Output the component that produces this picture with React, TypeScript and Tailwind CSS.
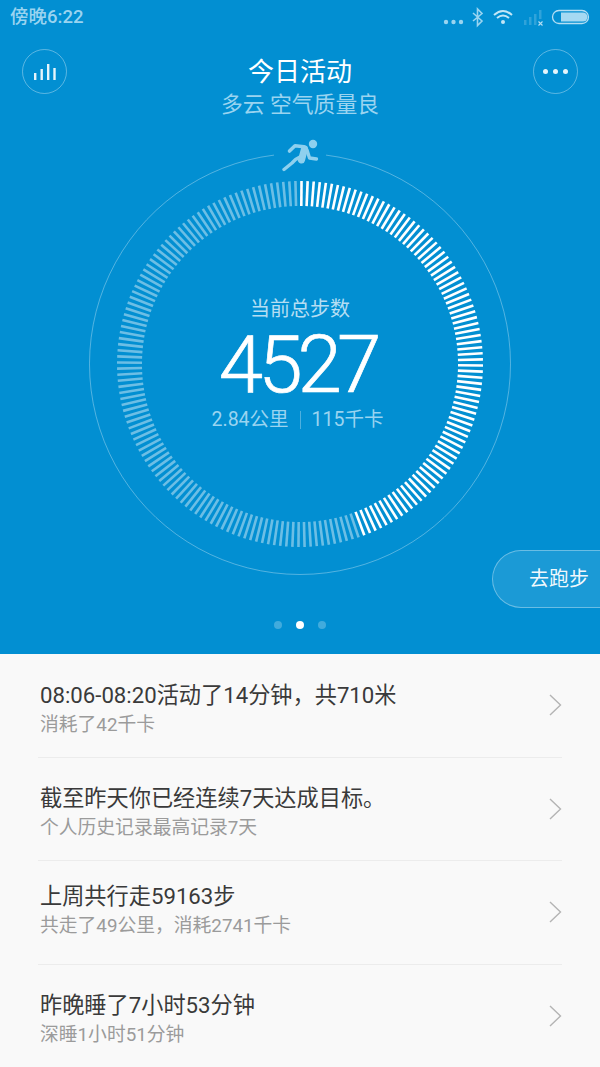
const TICKS = 188;
const ticks = Array.from({ length: TICKS }, (_, i) => i);

function Ring() {
  const cx = 212;
  const cy = 212;
  return (
    <svg width="424" height="424" viewBox="0 0 424 424" className="block">
      <path d="M 186 3.1 A 210.5 210.5 0 1 0 238 3.1" fill="none" stroke="#ffffff" strokeOpacity="0.32" strokeWidth="1" />
      {ticks.map((i) => {
        const a = ((i + 0.25) / TICKS) * Math.PI * 2;
        const s = Math.sin(a);
        const c = Math.cos(a);
        const active = i / TICKS < 160 / 360;
        return (
          <line
            key={i}
            x1={cx + 158 * s}
            y1={cy - 158 * c}
            x2={cx + 183 * s}
            y2={cy - 183 * c}
            stroke="#ffffff"
            strokeOpacity={active ? 1 : 0.42}
            strokeWidth="2.6"
          />
        );
      })}
    </svg>
  );
}

function Runner() {
  return (
    <svg width="38" height="36" viewBox="0 0 38 36" fill="none" stroke="#8ed0ee" strokeLinecap="round" strokeLinejoin="round">
      <circle cx="31" cy="5" r="4.2" fill="#8ed0ee" stroke="none" />
      <path d="M7.5 12 L13 6.8 L22 7.8" strokeWidth="3.6" />
      <path d="M22.5 10 L19.5 21" strokeWidth="7" />
      <path d="M25 11 L27.5 19 L34.5 20" strokeWidth="3.4" />
      <path d="M18 18 L13.5 20.5 L10 24 L2 30.5" strokeWidth="3.4" />
    </svg>
  );
}

function Row({ title, sub, shift = "pt-[6px]" }: { title: string; sub: string; shift?: string }) {
  return (
    <div className="h-[103.5px] shrink-0 flex items-center justify-between pl-[2px] border-b border-[#ececec]">
      <div className={shift}>
        <div className="text-[22.2px] leading-[32px] text-[#3a3a3a]">{title}</div>
        <div className="text-[18.8px] leading-[26px] mt-[1px] text-[#9b9b9b]">{sub}</div>
      </div>
      <svg width="13" height="22" viewBox="0 0 13 22" fill="none" stroke="#b4b4b4" strokeWidth="1.4">
        <path d="M1 1 L11.5 11 L1 21" />
      </svg>
    </div>
  );
}

export default function App() {
  return (
    <div className="relative w-[600px] h-[1067px] overflow-hidden bg-[#f9f9f9] flex flex-col font-['Roboto','Noto_Sans_CJK_SC',sans-serif]">
      <div className="relative h-[654px] shrink-0 bg-[#028fd2] flex flex-col">
        {/* status bar */}
        <div className="h-[35px] shrink-0 flex items-center justify-between pl-[10px] pr-[9px]">
          <span className="text-[18.5px] font-medium text-[#9ad4f0]">傍晚6:22</span>
          <div className="flex items-center">
            <svg width="148" height="22" viewBox="0 0 148 22" fill="none">
              <g fill="#9ad4f0">
                <circle cx="3" cy="15" r="2.2" />
                <circle cx="10.5" cy="15" r="2.2" />
                <circle cx="18" cy="15" r="2.2" />
              </g>
              <path d="M30 6 L39 14 L34.5 18.5 V2 L39 6.5 L30 14" stroke="#9ad4f0" strokeWidth="1.6" />
              <path d="M51 8 Q60 0 69 8 M54 11 Q60 6 66 11" stroke="#c2e6f6" strokeWidth="2" />
              <circle cx="60" cy="15" r="2" fill="#c2e6f6" />
              <g fill="#9ad4f0" fillOpacity="0.3">
                <rect x="81" y="13" width="2.5" height="5" />
                <rect x="86" y="10" width="2.5" height="8" />
                <rect x="91" y="7" width="2.5" height="11" />
                <rect x="96" y="3" width="2.5" height="9" />
              </g>
              <path d="M95.5 14.5 L99.5 18.5 M99.5 14.5 L95.5 18.5" stroke="#b5def3" strokeWidth="1.1" />
              <rect x="109.5" y="3.5" width="36" height="13" rx="6.5" stroke="#b5def3" strokeWidth="1.3" />
              <path d="M118 5.5 H140 a4.5 4.5 0 0 1 0 9 H118 Z" fill="#a5d9f2" />
            </svg>
          </div>
        </div>
        {/* header */}
        <div className="h-[60px] mt-[14px] shrink-0 flex items-start justify-between px-[22px]">
          <div className="w-[45px] h-[45px] rounded-full border border-white/35 flex items-center justify-center">
            <svg width="22" height="18" viewBox="0 0 22 18" fill="#ffffff" fillOpacity="0.9">
              <rect x="0" y="10" width="2.4" height="7" />
              <rect x="6.5" y="6" width="2.4" height="11" />
              <rect x="13" y="1" width="2.4" height="16" />
              <rect x="19.3" y="5" width="2.4" height="12" />
            </svg>
          </div>
          <div className="flex flex-col items-center mt-[5px]">
            <div className="text-[26px] leading-[36px] text-white">今日活动</div>
            <div className="text-[21.8px] leading-[28px] mt-[1px] text-[#9ad4f0]">多云 空气质量良</div>
          </div>
          <div className="w-[45px] h-[45px] rounded-full border border-white/35 flex items-center justify-center gap-[5px]">
            <span className="w-[5px] h-[5px] rounded-full bg-white/90" />
            <span className="w-[5px] h-[5px] rounded-full bg-white/90" />
            <span className="w-[5px] h-[5px] rounded-full bg-white/90" />
          </div>
        </div>
        {/* ring */}
        <div className="relative w-[424px] h-[424px] mx-auto mt-[43px] shrink-0">
          <Ring />
          <div className="absolute left-[194px] -top-[13px]">
            <Runner />
          </div>
          <div className="absolute inset-0 flex flex-col items-center">
            <div className="mt-[143px] text-[20px] leading-[28px] text-[#b5def3]">当前总步数</div>
            <div className="mt-[2px] pr-[5px] text-[80px] leading-[80px] font-light [-webkit-text-stroke:0.7px_white] text-white tracking-[-5px]">4527</div>
            <div className="mt-[3px] pr-[5px] flex items-center text-[19.5px] leading-[24px] text-[#9ad4f0]">
              <span>2.84公里</span>
              <span className="mx-[11px] w-px h-[18px] bg-white/30" />
              <span>115千卡</span>
            </div>
          </div>
        </div>
        {/* dots */}
        <div className="mt-[45px] flex justify-center items-center gap-[14px]">
          <span className="w-[8px] h-[8px] rounded-full bg-white/25" />
          <span className="w-[8px] h-[8px] rounded-full bg-white" />
          <span className="w-[8px] h-[8px] rounded-full bg-white/25" />
        </div>
        {/* run pill */}
        <div className="absolute left-[492px] top-[550px] w-[120px] h-[58px] rounded-l-[29px] border border-white/35 bg-white/10 flex items-center pl-[36px] text-[20px] text-white/95">
          去跑步
        </div>
      </div>
      {/* list */}
      <div className="flex-1 flex flex-col pl-[38px] pr-[38px]">
        <Row title="08:06-08:20活动了14分钟，共710米" sub="消耗了42千卡" />
        <Row title="截至昨天你已经连续7天达成目标。" sub="个人历史记录最高记录7天" />
        <Row title="上周共行走59163步" sub="共走了49公里，消耗2741千卡" shift="pb-[6px]" />
        <Row title="昨晚睡了7小时53分钟" sub="深睡1小时51分钟" />
      </div>
    </div>
  );
}
